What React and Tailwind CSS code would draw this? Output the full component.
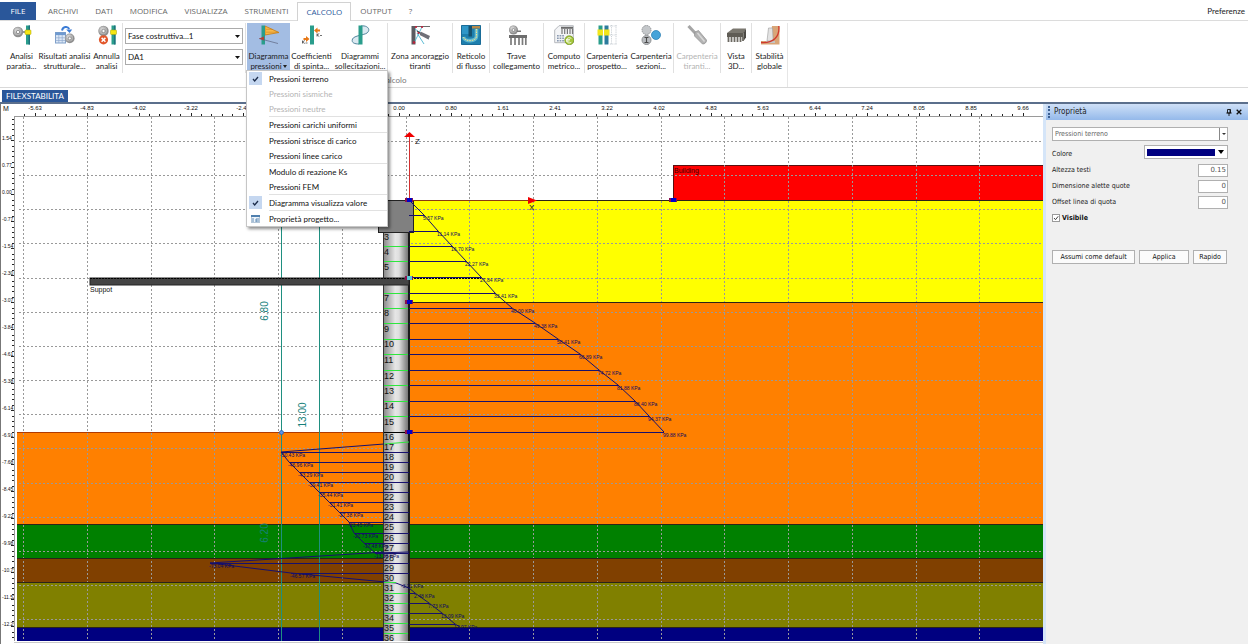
import React from "react";

const range = (n) => Array.from({ length: n }, (_, i) => i);

/* ---------- ribbon icons ---------- */

function Svg({ children }) {
  return (
    <svg viewBox="0 0 20 20" className="h-5 w-5 shrink-0" aria-hidden="true">
      {children}
    </svg>
  );
}

function Gear({ cx, cy, r = 5 }) {
  return (
    <g>
      <circle cx={cx} cy={cy} r={r} fill="#8f8f8f" />
      <circle cx={cx - 0.5} cy={cy - 0.7} r={r * 0.78} fill="#b4b4b4" />
      <circle cx={cx - 1} cy={cy - 1.4} r={r * 0.45} fill="#d0d0d0" />
      <circle cx={cx} cy={cy} r={r * 0.32} fill="#f8f8f8" stroke="#666" strokeWidth="0.6" />
    </g>
  );
}

function Wall({ x }) {
  return (
    <g>
      <rect x={x} y="0.5" width="4" height="19" fill="#2a9d8c" />
      <rect x={x + 2.6} y="0.5" width="1.4" height="19" fill="#1d6f7d" />
      <rect x={x - 1} y="5" width="6" height="4.5" rx="0.8" fill="#f5e613" stroke="#a9a000" strokeWidth="0.5" />
    </g>
  );
}

const icons = {
  analisi: (
    <Svg>
      <Gear cx={6} cy={7} r={5.2} />
      <path d="M11 7h3" stroke="#555" strokeWidth="1.2" />
      <Wall x={14} />
    </Svg>
  ),
  risultati: (
    <Svg>
      <rect x="0.5" y="7.5" width="10" height="10.5" fill="#dce8f6" stroke="#7f9fc9" />
      <rect x="0.5" y="7.5" width="10" height="2.6" fill="#6f9ad0" />
      <path d="M0.5 12.8h10M0.5 15.5h10M3.8 10v8M7.2 10v8" stroke="#8fabd0" strokeWidth="0.7" />
      <path d="M7 5.5C8 1.5 12.5.8 14.2 4" fill="none" stroke="#3a7bd5" strokeWidth="2" />
      <path d="M11.2 4.5h6L14.6 8z" fill="#3a7bd5" />
      <Gear cx={14.8} cy={13.4} r={4.8} />
    </Svg>
  ),
  annulla: (
    <Svg>
      <Gear cx={6.5} cy={6} r={5.2} />
      <Wall x={14.5} />
      <circle cx="6.5" cy="14.8" r="4.6" fill="#e2572b" />
      <path d="M4.6 12.9l3.8 3.8M8.4 12.9l-3.8 3.8" stroke="#fff" strokeWidth="1.5" />
    </Svg>
  ),
  pressioni: (
    <Svg>
      <path d="M6 1l14 6.5L6 10z" fill="#f8b84a" stroke="#c77b12" strokeWidth="0.8" />
      <path d="M7 4.3h6.5M7 7.2h12" stroke="#c77b12" strokeWidth="0.5" />
      <rect x="2.5" y="0.5" width="3.5" height="19" fill="#2a9d8c" />
      <path d="M0 13.5l19 5" stroke="#5b6480" strokeWidth="0.7" />
      <path d="M0 13.5l5-2v4z" fill="#b0423a" />
    </Svg>
  ),
  coefficienti: (
    <Svg>
      <rect x="8" y="0.5" width="4" height="19" fill="#2a9d8c" />
      <path d="M12 5.500l3.500-3v2H18v2h-2.500v2z" fill="#e77817" />
      <path d="M7.500 14L4 11v2H1.500v2H4v2z" fill="#e77817" />
      <path d="M15 8.500v3M17.300 8.500L15 10l2.300 1.500M18 10.500h2" stroke="#333" strokeWidth="0.7" fill="none" />
      <path d="M.5 15.500v3M2.800 15.500L.5 17l2.300 1.500M3.500 18h2" stroke="#333" strokeWidth="0.7" fill="none" />
    </Svg>
  ),
  sollecitazioni: (
    <Svg>
      <path d="M11 1c7-1 10 4 6 7C14.500 10 4 10.500 2.500 14 1 18 5 19 9 19" fill="#dbe9f1" stroke="#52859c" strokeWidth="1" />
      <rect x="8.500" y="0.500" width="4" height="19" fill="#2a9d8c" />
    </Svg>
  ),
  ancoraggio: (
    <Svg>
      <path d="M2 1.500h18" stroke="#6b6b6b" strokeWidth="1" />
      <rect x="1.500" y="1" width="4" height="18.500" fill="#5b5b60" />
      <path d="M5 4l13.500 10M5 16l7-14M7 8l7 11" stroke="#4bb4cf" strokeWidth="0.9" />
      <path d="M7 6l4 2.500" stroke="#4a4a4a" strokeWidth="1.2" />
      <path d="M11 6.700l9 4.300-1.500 3.500-8.800-4.500z" fill="#707078" />
      <circle cx="6" cy="2" r="1.100" fill="#c0203a" />
      <circle cx="12" cy="2" r="1.100" fill="#c0203a" />
      <circle cx="4" cy="17.500" r="1.200" fill="#c0203a" />
      <circle cx="8.500" cy="8" r="1.100" fill="#c0203a" />
    </Svg>
  ),
  reticolo: (
    <Svg>
      <rect x="0.500" y="0.500" width="19" height="19" fill="#1d7fae" />
      <rect x="11" y="0.500" width="8.500" height="3" fill="#b58a4c" />
      <path d="M.5.500H8V9H.5z" fill="#2f97c8" />
      <path d="M15.500 4v7c0 6-12 6-13 1" fill="none" stroke="#63b9cf" strokeWidth="3.600" />
      <path d="M15.500 4v7c0 6-12 6-13 1" fill="none" stroke="#f1e38a" strokeWidth="1" strokeDasharray="1.500 1" />
      <rect x="7.500" y="0.500" width="3.500" height="11" fill="#15516f" />
      <path d="M.5.500h19v19H.5z" fill="none" stroke="#1a6c98" />
    </Svg>
  ),
  trave: (
    <Svg>
      <Gear cx={6.500} cy={5} r={4.500} />
      <rect x="10" y="5.500" width="4" height="1.500" fill="#777" />
      <rect x="2" y="10" width="18" height="3" fill="#6d6d6d" />
      <path d="M4 13v7M8 13v7M12 13v7M15.500 13v7M18.800 13v7" stroke="#7b7b7b" strokeWidth="1.700" />
    </Svg>
  ),
  computo: (
    <Svg>
      <path d="M5 .7h14.300v17H.7V5z" fill="#f3f4f6" stroke="#b5b8bd" />
      <rect x="7" y="1.800" width="12" height="2" fill="#6b6b6b" />
      <path d="M8 4v5M10.700 4v5M13.400 4v5M16 4v5M18.500 4v5" stroke="#777" strokeWidth="1.200" />
      <path d="M3 10.700h7M3 13.200h7M3 15.700h7" stroke="#8898b0" strokeWidth="1.600" strokeDasharray="1.700 0.900" />
      <circle cx="15.300" cy="15.300" r="4.500" fill="#a4c639" stroke="#6f8f1d" strokeWidth="0.700" />
      <path d="M17.300 13.400c-3-1.700-4.500 0-4.500 1.900s1.500 3.600 4.500 2M12 14.700h4M12 16h3.500" fill="none" stroke="#fff" strokeWidth="0.900" />
    </Svg>
  ),
  prospetto: (
    <Svg>
      <rect x="1.500" y="0.500" width="4" height="19" fill="#2a9d8c" />
      <rect x="7.500" y="0.500" width="4" height="19" fill="#2c7b9c" />
      <rect x="0.500" y="4.500" width="5.500" height="6" fill="#f2e61a" />
      <rect x="7" y="4.500" width="5.500" height="6" fill="#f2e61a" />
      <path d="M13 1h7M13 10h7M13 19h7M14.500 0v20M19 0v20" stroke="#bcc4ca" strokeWidth="0.800" strokeDasharray="1.200 1" />
    </Svg>
  ),
  sezioni: (
    <Svg>
      <circle cx="5.500" cy="5" r="4.500" fill="#c4c7ca" stroke="#8e9194" strokeDasharray="1.500 0.800" />
      <circle cx="5.500" cy="15" r="4.500" fill="#b9bcc0" stroke="#8e9194" />
      <path d="M3.500 12.500h4M3.500 17.500h4M5.500 12.500v5" stroke="#4b4b4b" strokeWidth="1.100" />
      <circle cx="15" cy="10" r="4.500" fill="#45a3d9" stroke="#2f83b5" strokeWidth="0.800" />
    </Svg>
  ),
  tiranti: (
    <Svg>
      <path d="M1.500 1l7.500 8" stroke="#a5a5a5" strokeWidth="3" />
      <path d="M8 7l3.500-1.500 8 9.500c.5 2-2 4.500-4 4L7.500 11z" fill="#b3b3b3" stroke="#8f8f8f" strokeWidth="0.700" />
      <path d="M10.500 8l7 8.500" stroke="#d8d8d8" strokeWidth="1.500" />
    </Svg>
  ),
  vista: (
    <Svg>
      <path d="M1 8l6-4.500h13L18 8z" fill="#7a776f" />
      <path d="M17.500 8L20 3.500v9L17.500 16z" fill="#4c4a45" />
      <rect x="1" y="8" width="16.500" height="4" fill="#5f5c55" />
      <path d="M2.500 12v5M5.500 12v5M8.500 12v5M11.500 12v5M14.500 12v5M17 12v4" stroke="#6d6a63" strokeWidth="1.800" />
    </Svg>
  ),
  stabilita: (
    <Svg>
      <path d="M12 1h7.500v18.500H1V16h9z" fill="#d9a577" />
      <path d="M8.500 3h4l.7 13H7z" fill="#e3e3e3" stroke="#9b9b9b" strokeWidth="0.600" />
      <path d="M6 16h9v2H6z" fill="#c4c4c4" />
      <path d="M18.800 1C20 12 13 18.500 1 17.500" fill="none" stroke="#d0382b" strokeWidth="1.300" />
    </Svg>
  ),
};

/* ---------- header and ribbon ---------- */

const tabs = ["ARCHIVI", "DATI", "MODIFICA", "VISUALIZZA", "STRUMENTI", "CALCOLO", "OUTPUT", "?"];

function TabBar() {
  return (
    <nav className="flex h-[21px] items-end border-b border-[#dcdcdc] pt-[2px] font-['Open_Sans',sans-serif] text-[8px] text-[#666]">
      <button className="h-full w-9 bg-[#2a579a] text-white">FILE</button>
      <div className="flex h-full gap-px pl-1">
        {tabs.map((t) => (
          <button
            key={t}
            className={
              t === "CALCOLO"
                ? "-mb-px border border-b-0 border-[#d2d2d2] bg-white px-2 text-[#2a579a]"
                : "px-2"
            }
          >
            {t}
          </button>
        ))}
      </div>
      <button className="ml-auto h-full pr-[3px] font-['Lato','Open_Sans',sans-serif] text-[#222]">Preferenze</button>
    </nav>
  );
}

function Tool({ icon, l1, l2, width, active, disabled, arrow }) {
  return (
    <button
      disabled={disabled}
      className={`flex h-[48px] flex-col items-center pt-[2px] text-[8px] leading-[10px] whitespace-nowrap ${width} ${
        active ? "bg-[#a3bde3]" : ""
      } ${disabled ? "text-[#b4b4b4]" : "text-[#1c1c1c]"}`}
    >
      {icons[icon]}
      <span className="mt-[6px]">{l1}</span>
      <span className="flex items-center gap-px">
        {l2}
        {arrow && (
          <svg viewBox="0 0 4 3" className="h-[3px] w-1" aria-hidden="true">
            <path d="M0 0h4L2 3z" fill="#222" />
          </svg>
        )}
      </span>
    </button>
  );
}

function Sep() {
  return <div className="h-[50px] w-px shrink-0 bg-[#e0e0e0]" />;
}

function Combo({ label, value }) {
  return (
    <div className="relative">
      <select
        aria-label={label}
        defaultValue={value}
        className="block h-4 w-[118px] appearance-none border border-[#ababab] bg-white pl-[2px] text-[8px] leading-[14px] text-[#111]"
      >
        <option>{value}</option>
      </select>
      <svg viewBox="0 0 5 3" className="pointer-events-none absolute top-[7px] right-[3px] h-[3px] w-[5px]" aria-hidden="true">
        <path d="M0 0h5L2.500 3z" fill="#111" />
      </svg>
    </div>
  );
}

const menu = [
  { t: "Pressioni terreno", checked: true },
  { t: "Pressioni sismiche", disabled: true },
  { t: "Pressioni neutre", disabled: true, sep: true },
  { t: "Pressioni carichi uniformi", sep: true },
  { t: "Pressioni strisce di carico" },
  { t: "Pressioni linee carico", sep: true },
  { t: "Modulo di reazione Ks" },
  { t: "Pressioni FEM", sep: true },
  { t: "Diagramma visualizza valore", checked: true, sep: true },
  { t: "Proprietà progetto...", icon: true },
];

function PressureMenu() {
  return (
    <div
      role="menu"
      className="absolute top-[47px] -left-px z-10 w-[142px] border border-[#c6c6c6] bg-white shadow-[2px_2px_3px_rgba(0,0,0,0.45)]"
    >
      {menu.map((m) => (
        <React.Fragment key={m.t}>
          <button
            role="menuitem"
            disabled={m.disabled}
            className={`flex h-[15px] w-full items-center text-left text-[8px] whitespace-nowrap ${
              m.disabled ? "text-[#b3b3b3]" : "text-[#111]"
            }`}
          >
            <span className="flex w-[22px] pl-[2px]">
              {m.checked && (
                <span className="flex h-[13px] w-[13px] items-center justify-center bg-[#c5d7f0]">
                  <svg viewBox="0 0 7 6" className="h-[6px] w-[7px]" aria-hidden="true">
                    <path d="M1 3l1.700 2L6 1" fill="none" stroke="#1c2c4a" strokeWidth="1.300" />
                  </svg>
                </span>
              )}
              {m.icon && (
                <svg viewBox="0 0 9 8" className="ml-[2px] h-2 w-[9px]" aria-hidden="true">
                  <rect x="0.500" y="0.500" width="8" height="7" fill="#eef4fa" stroke="#b4c6d8" />
                  <rect width="9" height="2" fill="#4f7fae" />
                  <path d="M1 4h2M1 6h2M5 4h3M5 6h3M5 4v3" stroke="#4f7fae" strokeWidth="0.900" />
                </svg>
              )}
            </span>
            {m.t}
          </button>
          {m.sep && <div className="ml-[22px] h-px bg-[#e1e1e1]" />}
        </React.Fragment>
      ))}
    </div>
  );
}

function Ribbon() {
  return (
    <div className="flex h-[67px] border-b border-[#d9d9d9] pt-[2px]">
      <section className="flex flex-col items-center border-r border-[#e6e6e6]">
        <div className="flex pl-[5px]">
          <Tool icon="analisi" l1="Analisi" l2="paratia..." width="w-[33px]" />
          <Tool icon="risultati" l1="Risultati analisi" l2="strutturale..." width="w-[53px]" />
          <Tool icon="annulla" l1="Annulla" l2="analisi" width="w-[31px]" />
          <Sep />
          <div className="flex flex-col gap-[5px] px-[2px] pt-[5px]">
            <Combo label="Fase costruttiva" value="Fase costruttiva...1" />
            <Combo label="Combinazione" value="DA1" />
          </div>
          <Sep />
          <div className="relative ml-px flex">
            <Tool icon="pressioni" l1="Diagramma" l2="pressioni" width="w-[43px]" active arrow />
            <PressureMenu />
          </div>
          <Tool icon="coefficienti" l1="Coefficienti" l2="di spinta..." width="w-[43px]" />
          <Tool icon="sollecitazioni" l1="Diagrammi" l2="sollecitazioni..." width="w-[54px]" />
          <Sep />
          <Tool icon="ancoraggio" l1="Zona ancoraggio" l2="tiranti" width="w-[64px]" />
          <Sep />
          <Tool icon="reticolo" l1="Reticolo" l2="di flusso" width="w-[36px]" />
          <Sep />
          <Tool icon="trave" l1="Trave" l2="collegamento" width="w-[53px]" />
          <Sep />
          <Tool icon="computo" l1="Computo" l2="metrico..." width="w-[40px]" />
          <Sep />
          <Tool icon="prospetto" l1="Carpenteria" l2="prospetto..." width="w-[44px]" />
          <Tool icon="sezioni" l1="Carpenteria" l2="sezioni..." width="w-[44px]" />
          <Sep />
          <Tool icon="tiranti" l1="Carpenteria" l2="tiranti..." width="w-[46px]" disabled />
          <Sep />
          <Tool icon="vista" l1="Vista" l2="3D..." width="w-[30px]" />
          <Sep />
          <Tool icon="stabilita" l1="Stabilità" l2="globale" width="w-[35px]" />
        </div>
        <div className="text-[8px] leading-[14px] text-[#777]">Calcolo</div>
      </section>
    </div>
  );
}

/* ---------- drawing canvas ---------- */

/* horizontal ruler labels, by index of the 52-unit step from the left */
const xLabels = [
  [0, "-5.63"], [1, "-4.83"], [2, "-4.02"], [3, "-3.22"], [4, "-2.41"], [7, "0.00"], [8, "0.80"],
  [9, "1.61"], [10, "2.41"], [11, "3.22"], [12, "4.02"], [13, "4.83"], [14, "5.63"], [15, "6.44"],
  [16, "7.24"], [17, "8.05"], [18, "8.85"], [19, "9.66"],
];
const yLabels = [
  "1.54", "0.77", "0.00", "-0.77", "-1.54", "-2.30", "-3.07", "-3.84", "-4.61", "-5.38",
  "-6.14", "-6.91", "-7.68", "-8.45", "-9.22", "-9.98", "-10.75", "-11.52", "-12.29",
];

const strata = [
  [409, 200, 302, "#ffff00"],
  [409, 302, 524, "#ff8000"],
  [17, 432, 524, "#ff8000"],
  [17, 524, 558, "#008000"],
  [17, 558, 582, "#804000"],
  [17, 582, 627, "#808000"],
  [17, 627, 641, "#000080"],
];

const activeSide = [
  [424, 215, "5.57"], [438, 231, "11.14"], [452, 246, "16.70"], [466, 261, "22.27"],
  [481, 277, "27.84"], [495, 293, "33.41"], [512, 308, "40.00"], [535, 323, "49.38"],
  [558, 339, "58.41"], [580, 354, "66.89"], [599, 370, "74.72"], [618, 385, "81.88"],
  [635, 401, "88.40"], [649, 416, "94.37"], [664, 432, "99.88"],
];
const passiveSide = [
  [281, 452, "-50.43"], [289, 462, "-46.96"], [299, 472, "-43.29"], [309, 482, "-39.41"],
  [319, 492, "-35.44"], [329, 502, "-31.41"], [339, 512, "-27.38"], [349, 522, "-23.45"],
  [354, 533, "-20.73"], [364, 543, "-17.48"], [375, 553, "-13.38"],
];
const lowerLeft = [[210, 563, "-78.04"], [291, 573, "-46.57"]];
const lowerRight = [[415, 593, "2.48"], [429, 603, "7.73"], [442, 613, "13.09"], [455, 624, "17.97"]];

const pileNumbers = [
  [3, 237], [4, 252], [5, 267], [7, 298], [8, 313], [9, 329], [10, 344], [11, 360], [12, 376],
  [13, 391], [14, 406], [15, 422], [16, 437], [17, 447], [18, 457], [19, 467], [20, 477],
  [21, 487], [22, 497], [23, 507], [24, 517], [25, 527], [26, 538], [27, 548], [28, 558],
  [29, 568], [30, 578], [31, 588], [32, 598], [33, 608], [34, 618], [35, 628], [36, 638],
];

function Handle({ x, y, fill = "#0000c8" }) {
  return (
    <g>
      <rect x={x - 4} y={y - 2} width="8" height="4" fill="#8a1050" />
      <rect x={x - 2} y={y - 2} width="5" height="4" fill={fill} />
    </g>
  );
}

function Value({ p }) {
  return (
    <text x={p[0] - 1} y={p[1] + 5}>
      {p[2]} KPa
    </text>
  );
}

function Drawing() {
  const pts = (a) => a.map((p) => `${p[0]},${p[1]}`).join(" ");
  return (
    <svg className="absolute inset-0 h-full w-full bg-white font-['Liberation_Sans',sans-serif]" role="img" aria-label="Sezione paratia">
      <defs>
        <linearGradient id="pile">
          <stop offset="0" stopColor="#8c8c8c" />
          <stop offset="0.450" stopColor="#e6e6e6" />
          <stop offset="0.600" stopColor="#dedede" />
          <stop offset="1" stopColor="#6a6a6a" />
        </linearGradient>
      </defs>
      <g transform="translate(0 -104)">
        {strata.map(([x, y1, y2, c]) => (
          <rect key={`${x}-${y1}`} x={x} y={y1} width="4000" height={y2 - y1} fill={c} />
        ))}
        <rect x="673.500" y="165.500" width="4000" height="35" fill="#ff0000" stroke="#5a1010" />

        <g stroke="#999" strokeWidth="1" strokeDasharray="2 2" shapeRendering="crispEdges">
          {range(40).map((i) => (
            <line key={i} x1={23.5 + i * 63.75} x2={23.5 + i * 63.75} y1="117" y2="641" />
          ))}
          {range(15).map((i) => (
            <line key={i} x1="19" x2="4000" y1={141.5 + i * 34.15} y2={141.5 + i * 34.15} />
          ))}
        </g>

        <g stroke="#2b2418" strokeWidth="1" shapeRendering="crispEdges">
          <path d="M409 302.500H4000M17 524.500H4000M17 558.500H4000M17 582.500H4000M17 627.500H4000" />
          <path d="M409 200.500H4000" />
          <path d="M17 432.500H384" stroke="#b03a00" />
        </g>

        <g stroke="#1f8f80" strokeWidth="1">
          <path d="M281.500 200V641M319.500 200V641" />
        </g>
        <g fill="#16807a" fontSize="10" textAnchor="middle">
          <text transform="translate(268 311) rotate(-90)">6.80</text>
          <text transform="translate(306 415) rotate(-90)">13.00</text>
          <text transform="translate(268 533) rotate(-90)">6.20</text>
        </g>

        <rect x="384" y="232" width="25" height="409" fill="url(#pile)" />
        <path d="M383.500 232V641" stroke="#333" strokeWidth="1" />
        <path d="M409 200V641" stroke="#1a1a1a" strokeWidth="2" />
        <path d="M384 432.500H409" stroke="#000" />
        <g stroke="#2ee63e" strokeWidth="1" shapeRendering="crispEdges">
          {[246, 261, 293, 308, 323, 339, 354, 370, 385, 401, 416, 593, 603, 613, 623, 633].map((y) => (
            <path key={y} d={`M384 ${y}.500H408`} />
          ))}
        </g>

        <rect x="90" y="278" width="319" height="7" fill="#444" stroke="#222" strokeWidth="1" />
        <path d="M90 278.500H481" stroke="#000" strokeDasharray="2 1" />
        <text x="90" y="292" fontSize="7" fill="#111">Suppot</text>

        <rect x="378.500" y="200.500" width="35" height="32" fill="#808080" stroke="#222" />

        <g stroke="#16106e" strokeWidth="1" fill="none">
          <g shapeRendering="crispEdges">
            {[...activeSide, ...passiveSide, ...lowerLeft, ...lowerRight].map((p) => (
              <path key={p[1] + p[2]} d={`M409 ${p[1]}.500H${p[0]}`} />
            ))}
          </g>
          <polyline points={pts([[409, 200], ...activeSide])} />
          <polyline points={pts([[384, 444], ...passiveSide])} />
          <polyline points="384,552 210,563 291,573 396,583 409,588 415,593 429,603 442,613 455,624 460,627" />
          <path d="M375 553L409 552" />
        </g>
        <path d="M384 444l25-2M384 582.500h12" stroke="#2ee63e" />

        <g fill="#111" fontSize="9">
          {pileNumbers.map(([n, y]) => (
            <text key={n} x="384" y={y + 3}>{n}</text>
          ))}
        </g>
        <g fill="#0c0860" fontSize="5">
          {[...activeSide, ...passiveSide, ...lowerLeft, [402, 583, "-3.21"], ...lowerRight].map((p) => (
            <Value key={p[2]} p={p} />
          ))}
        </g>

        <path d="M409.500 137V200" stroke="#d23030" />
        <path d="M404 137l5.500-5 5.500 5z" fill="#f00000" />
        <path d="M413 200.500H530" stroke="#8c3a10" />
        <path d="M528 197l9 3.500-9 3.500z" fill="#f00000" />
        <g fontSize="8" fill="#111">
          <text x="415" y="144">Z</text>
          <text x="529" y="210">X</text>
        </g>
        <text x="674" y="173" fontSize="7" fill="#3a0000">Building</text>
        <Handle x={409} y={200} />
        <Handle x={673} y={200} />
        <Handle x={409} y={302} />
        <Handle x={409} y={432} />
        <Handle x={409} y={278} fill="#59c9d6" />
        <circle cx="281.500" cy="432.500" r="2" fill="#5b95e8" stroke="#2a5fae" strokeWidth="0.800" />

        <rect x="0" y="641" width="4000" height="400" fill="#fff" />
        <rect x="14" y="642" width="4000" height="1" fill="#c9c9c9" />

        {/* rulers */}
        <rect x="0" y="104" width="4000" height="12" fill="#fff" />
        <rect x="0" y="104" width="14" height="540" fill="#fff" />
        <path d="M14 116.500H4000M14.500 116V641" stroke="#9a9a9a" shapeRendering="crispEdges" />
        <g stroke="#222" shapeRendering="crispEdges">
          {range(97).map((i) => {
            const x = 24.6 + i * 10.4;
            return <line key={i} x1={x} x2={x} y1={i % 5 === 1 ? 113 : 114} y2="116" />;
          })}
          {range(97).map((i) => {
            const y = 119 + i * 5.4;
            return <line key={i} y1={y} y2={y} x1={i % 5 === 4 ? 11 : 12} x2="14" />;
          })}
        </g>
        <g fontSize="6" fill="#111">
          {xLabels.map(([i, t]) => (
            <text key={t} x={35 + i * 52} y="110" textAnchor="middle">{t}</text>
          ))}
          <text x="3" y="111" fontSize="7">M</text>
        </g>
        <svg x="0" y="104" width="14" height="540">
          <g fontSize="5" fill="#111">
            {yLabels.map((t, i) => (
              <text key={t} x="2" y={36 + i * 27}>{t}</text>
            ))}
          </g>
        </svg>
        <rect x="0" y="104" width="1" height="540" fill="#777" />
      </g>
    </svg>
  );
}

/* ---------- properties panel ---------- */

function NumberField({ id, label, value }) {
  return (
    <div className="flex h-4 items-center justify-between">
      <label htmlFor={id}>{label}</label>
      <input
        id={id}
        defaultValue={value}
        className="h-[13px] w-[30px] border border-[#b0b0b0] bg-white px-px text-right font-['DejaVu_Sans',sans-serif] text-[7px] text-[#555]"
      />
    </div>
  );
}

function Properties() {
  return (
    <aside className="flex w-[205px] shrink-0 flex-col border-l-[3px] border-[#d5e5f8] bg-[#f0f0f0] font-['DejaVu_Sans_Condensed','DejaVu_Sans',sans-serif] text-[7px] text-[#222]">
      <header className="flex h-4 items-center bg-linear-to-b from-[#cfe0f7] to-[#94b9ea] pr-[6px] pl-[2px]">
        <span className="mr-1 h-[12px] border-l-2 border-dotted border-[#3b5f92]" />
        <h2 className="mr-auto text-[8px]">Proprietà</h2>
        <button aria-label="Blocca pannello" className="mr-1">
          <svg viewBox="0 0 6 7" className="h-[7px] w-[6px]">
            <path d="M1.500.5h3v3.500h-3zM.3 4h5.400M3 4v3M4 .5v3.500" fill="none" stroke="#111" strokeWidth="0.900" />
          </svg>
        </button>
        <button aria-label="Chiudi pannello">
          <svg viewBox="0 0 6 6" className="h-[6px] w-[6px]">
            <path d="M.7.700l4.600 4.600M5.300.700L.7 5.300" stroke="#111" strokeWidth="1.300" />
          </svg>
        </button>
      </header>
      <form className="pt-[7px] pr-[20px] pl-[6px]" onSubmit={(e) => e.preventDefault()}>
        <div className="relative">
          <select
            aria-label="Elemento"
            className="block h-[14px] w-full appearance-none border border-[#b0b0b0] bg-white pl-[2px] text-[7px] text-[#666]"
          >
            <option>Pressioni terreno</option>
          </select>
          <span className="pointer-events-none absolute inset-y-px right-px flex w-2 items-center justify-center border-l border-[#888]">
            <svg viewBox="0 0 4 2" className="h-[2px] w-1" aria-hidden="true">
              <path d="M0 0h4L2 2z" fill="#333" />
            </svg>
          </span>
        </div>
        <div className="mt-1 mb-[3px] flex items-end justify-between">
          <label htmlFor="colore">Colore</label>
          <div className="relative">
            <select
              id="colore"
              className="block h-[14px] w-[84px] appearance-none border border-[#b0b0b0] bg-white text-[7px] text-transparent"
            >
              <option>Blu navy</option>
            </select>
            <span className="pointer-events-none absolute inset-0 flex items-center gap-[3px] pl-[3px]">
              <span className="h-[7px] w-[68px] bg-[#000080]" />
              <svg viewBox="0 0 6 4" className="h-1 w-[6px]" aria-hidden="true">
                <path d="M0 0h6L3 4z" fill="#000" />
              </svg>
            </span>
          </div>
        </div>
        <NumberField id="altezza" label="Altezza testi" value="0.15" />
        <NumberField id="alette" label="Dimensione alette quote" value="0" />
        <NumberField id="offset" label="Offset linea di quota" value="0" />
        <label className="flex h-4 items-center gap-[2px] font-bold text-[#111]">
          <span className="relative flex h-2 w-2">
            <input type="checkbox" defaultChecked className="peer h-2 w-2 appearance-none border border-[#9a9a9a] bg-white" />
            <svg viewBox="0 0 8 8" className="pointer-events-none absolute inset-0 hidden h-2 w-2 peer-checked:block" aria-hidden="true">
              <path d="M2 4l1.500 1.700L6.200 2.300" fill="none" stroke="#444" strokeWidth="1" />
            </svg>
          </span>
          Visibile
        </label>
        <div className="mt-6 flex gap-1 whitespace-nowrap text-[#111]">
          <button className="h-[14px] w-[83px] border border-[#b0b0b0] bg-[#fbfbfb]">Assumi come default</button>
          <button className="h-[14px] w-[50px] border border-[#b0b0b0] bg-[#fbfbfb]">Applica</button>
          <button className="h-[14px] w-[34px] border border-[#b0b0b0] bg-[#fbfbfb]">Rapido</button>
        </div>
      </form>
    </aside>
  );
}

export default function App() {
  return (
    <div className="flex h-screen flex-col overflow-hidden bg-white font-['Lato','Open_Sans',sans-serif]">
      <TabBar />
      <Ribbon />
      <div className="flex h-4 items-end border-b-2 border-[#5b6f8c] pl-[2px]">
        <button className="h-[12px] bg-[#2a579a] px-1 text-[8px] leading-[12px] text-white">FILEXSTABILITA</button>
      </div>
      <div className="flex min-h-0 flex-1">
        <main className="relative min-w-0 flex-1 overflow-hidden">
          <Drawing />
        </main>
        <Properties />
      </div>
    </div>
  );
}
